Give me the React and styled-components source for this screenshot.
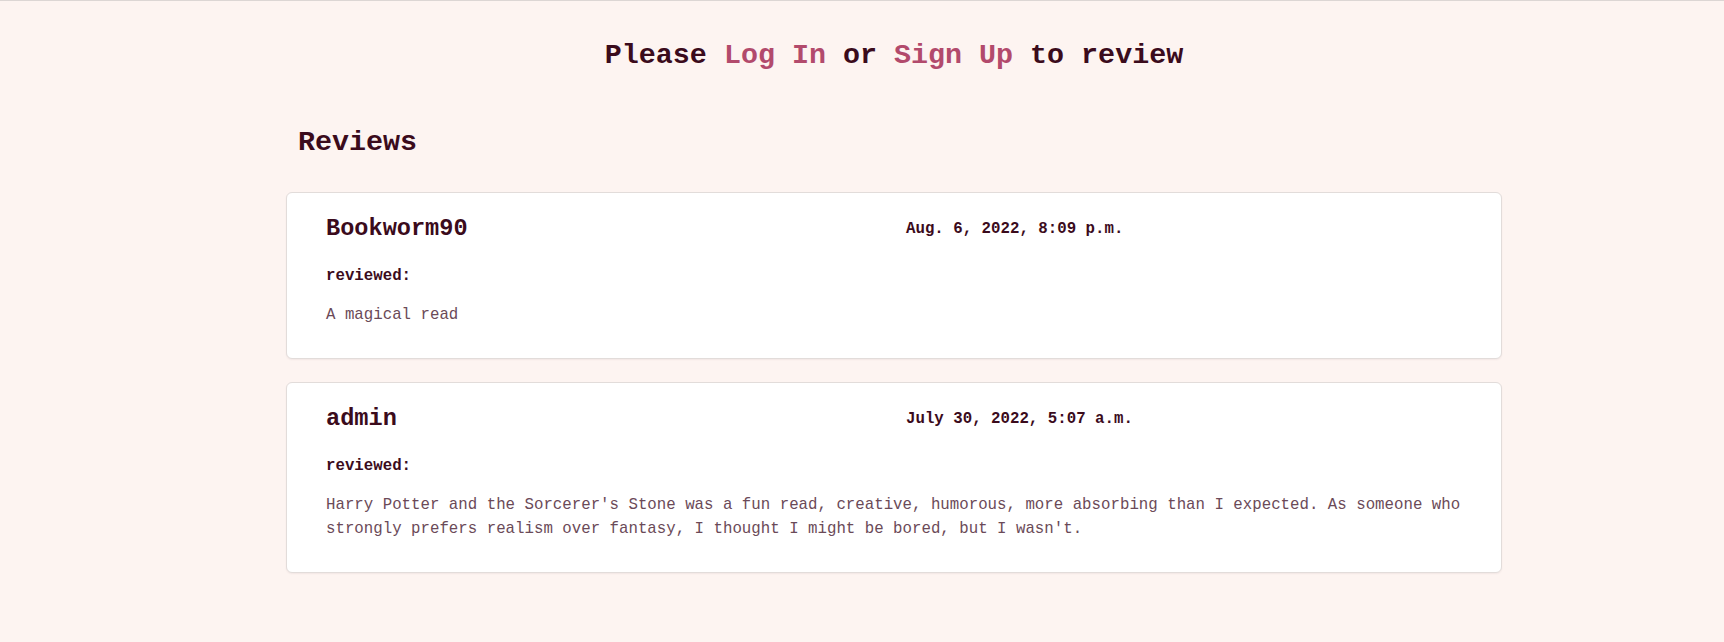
import React from "react";
import styled, { createGlobalStyle } from "styled-components";

const GlobalStyle = createGlobalStyle`
  html, body {
    margin: 0;
    padding: 0;
    background: #fdf4f1;
  }

  body {
    font-family: "Liberation Mono", "Courier New", monospace;
    font-size: 15.75px;
    line-height: 1.5;
    color: #3b0b1c;
  }
`;

const TopRule = styled.div`
  border-top: 1px solid #dcd6d4;
`;

const Main = styled.main`
  max-width: 1280px;
  margin: 0 auto;
  padding: 0 0 40px 64px;
  box-sizing: border-box;
`;

const Heading = styled.h3`
  margin: ${(p) => p.$top || "0"} 0 0;
  padding: 0 12px;
  font-size: 28.35px;
  line-height: 1.2;
  font-weight: 700;
  text-align: ${(p) => (p.$center ? "center" : "left")};
  color: #3b0b1c;
`;

const AuthLink = styled.a`
  color: #b24a6c;
  text-decoration: none;
  cursor: pointer;
`;

const ReviewList = styled.div`
  display: flex;
  flex-direction: column;
  gap: 23px;
  margin-top: 32.5px;
`;

const Card = styled.article`
  background: #fff;
  border: 1px solid #e2dcda;
  border-radius: 6px;
  box-shadow: 0 1px 2px rgba(60, 20, 30, 0.06);
  padding: 22.4px 39px 30px;
`;

const CardHead = styled.div`
  display: grid;
  grid-template-columns: 1fr 1fr;
  column-gap: 24px;
  align-items: center;
`;

const Author = styled.h4`
  margin: 0;
  font-size: 23.6px;
  line-height: 1.2;
  font-weight: 700;
  color: #3b0b1c;
`;

const Stamp = styled.span`
  font-weight: 700;
  color: #3b0b1c;
`;

const Label = styled.h6`
  margin: 21.6px 0 0;
  font-size: 15.75px;
  line-height: 1.5;
  font-weight: 700;
  color: #3b0b1c;
`;

const Body = styled.p`
  margin: 15.4px 0 0;
  color: #6b4a58;
`;

const reviews = [
  {
    user: "Bookworm90",
    date: "Aug. 6, 2022, 8:09 p.m.",
    text: "A magical read",
  },
  {
    user: "admin",
    date: "July 30, 2022, 5:07 a.m.",
    text: "Harry Potter and the Sorcerer's Stone was a fun read, creative, humorous, more absorbing than I expected. As someone who strongly prefers realism over fantasy, I thought I might be bored, but I wasn't.",
  },
];

export default function App() {
  return (
    <>
      <GlobalStyle />
      <TopRule />
      <Main>
        <Heading $center $top="37.5px">
          Please <AuthLink>Log In</AuthLink> or <AuthLink>Sign Up</AuthLink> to
          review
        </Heading>
        <Heading $top="53px">Reviews</Heading>
        <ReviewList>
          {reviews.map((r) => (
            <Card key={r.user}>
              <CardHead>
                <Author>{r.user}</Author>
                <Stamp>{r.date}</Stamp>
              </CardHead>
              <Label>reviewed:</Label>
              <Body>{r.text}</Body>
            </Card>
          ))}
        </ReviewList>
      </Main>
    </>
  );
}
